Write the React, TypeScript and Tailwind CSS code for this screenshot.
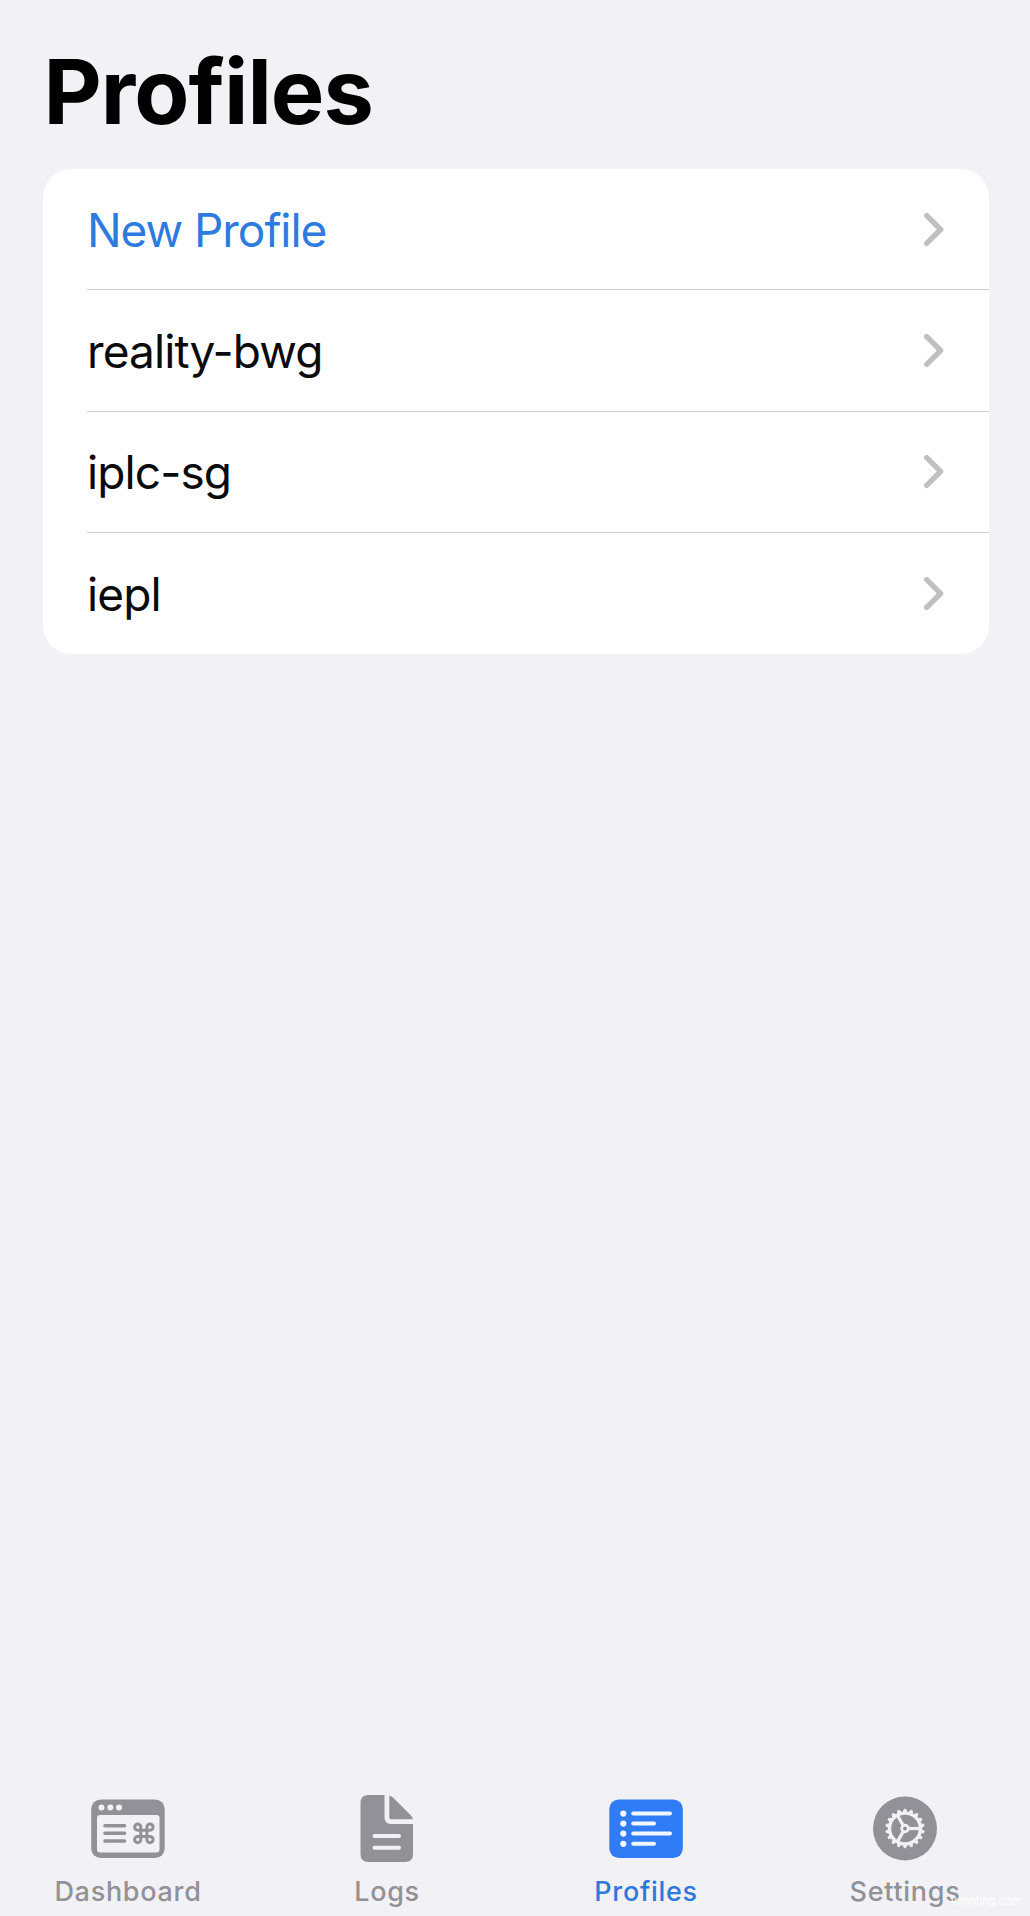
import type { ReactNode } from "react";

const profiles = ["reality-bwg", "iplc-sg", "iepl"];

function ChevronIcon() {
  return (
    <svg width="20" height="34" viewBox="0 0 20 34" fill="none" className="mt-px shrink-0">
      <path d="M2.7 2.7 L16.6 16.5 L2.7 30.3" stroke="#c0c0c2" strokeWidth="5.4" strokeLinecap="round" strokeLinejoin="round" />
    </svg>
  );
}

function DashboardIcon() {
  return (
    <svg width="74" height="68" viewBox="0 0 74 68" fill="none">
      <rect x="0.2" y="4.5" width="73.5" height="58.5" rx="9.5" fill="currentColor" />
      <rect x="6" y="20" width="62.5" height="37.5" rx="3" fill="#f2f1f5" />
      <circle cx="10.5" cy="12.5" r="3" fill="#f2f1f5" />
      <circle cx="19.3" cy="12.5" r="3" fill="#f2f1f5" />
      <circle cx="28" cy="12.5" r="3" fill="#f2f1f5" />
      <path d="M14 30.7H33.5M14 38.3H33.5M14 46H33.5" stroke="currentColor" strokeWidth="3.6" strokeLinecap="round" />
      <path
        d="M49.8 35.2V32.3a3.1 3.1 0 1 0-3.1 2.9H59a3.1 3.1 0 1 0-3.1-2.9V44.6a3.1 3.1 0 1 0 3.1-3.1H46.7a3.1 3.1 0 1 0 3.1 3.1Z"
        stroke="currentColor"
        strokeWidth="3"
        strokeLinejoin="round"
      />
    </svg>
  );
}

function LogsIcon() {
  return (
    <svg width="54" height="68" viewBox="0 0 54 68" fill="none">
      <path
        d="M8.5 0H24.5V22.5Q24.5 29 31 29H53V59Q53 67 45 67H8.5Q0.5 67 0.5 59V8Q0.5 0 8.5 0Z"
        fill="currentColor"
      />
      <path d="M29.3 0.5Q31.5 1 33.5 3L50 19.5Q52.5 22 53 24.3H31Q29.3 24.3 29.3 22.6Z" fill="currentColor" />
      <path d="M14.5 41H39M14.5 52.7H39" stroke="#f2f1f5" strokeWidth="4" strokeLinecap="round" />
    </svg>
  );
}

function ProfilesIcon() {
  return (
    <svg width="74" height="68" viewBox="0 0 74 68" fill="none">
      <rect x="0.3" y="4.5" width="73.5" height="58.5" rx="9.5" fill="#2f7cf6" />
      {[18.6, 28.6, 38.6, 48.8].map((y, i) => (
        <g key={y}>
          <circle cx="14.3" cy={y} r="3.1" fill="#f2f7ff" />
          <path d={`M24.2 ${y}H${i % 2 ? 45 : 61}`} stroke="#f2f7ff" strokeWidth="4" strokeLinecap="round" />
        </g>
      ))}
    </svg>
  );
}

function SettingsIcon() {
  const teeth = Array.from({ length: 18 }, (_, i) => i * 20 + 10);
  return (
    <svg width="64" height="68" viewBox="0 0 64 68" fill="none">
      <circle cx="32" cy="33.5" r="32" fill="currentColor" />
      <g transform="translate(32 33.5)" stroke="#f2f1f5">
        <circle r="15.4" strokeWidth="3.2" />
        {teeth.map((a) => (
          <path key={a} d="M16 -2.1L19.3 -0.8V0.8L16 2.1Z" transform={`rotate(${a})`} fill="#f2f1f5" strokeWidth="0.8" strokeLinejoin="round" />
        ))}
        <circle r="3.3" strokeWidth="2.8" />
        {[0, 120, 240].map((a) => (
          <path key={a} d="M4.2 0H15" transform={`rotate(${a})`} strokeWidth="3.2" />
        ))}
      </g>
    </svg>
  );
}

interface RowProps {
  label: string;
  accent?: boolean;
  last?: boolean;
}

function ProfileRow({ label, accent, last }: RowProps) {
  return (
    <li className="h-[121.3px] pl-[44px]">
      <div className={`flex h-full items-center justify-between pr-[45px] ${last ? "" : "border-b-[1.5px] border-[#cfcfd1]"}`}>
        <span className={`pt-px text-[46px] leading-none ${accent ? "tracking-[-1.05px] text-[#2d7ae0]" : "tracking-[-0.9px] text-[#0b0b0c]"}`}>
          {label}
        </span>
        <ChevronIcon />
      </div>
    </li>
  );
}

interface TabProps {
  label: string;
  icon: ReactNode;
  active?: boolean;
}

function Tab({ label, icon, active }: TabProps) {
  return (
    <button className={`flex flex-col items-center ${active ? "text-[#2d79dc]" : "text-[#929197]"}`}>
      {icon}
      <span className="mt-[14px] pl-px text-[27px] leading-[30px] font-medium tracking-[0.7px]">{label}</span>
    </button>
  );
}

export default function App() {
  return (
    <div className="relative flex h-[1916px] w-[1030px] flex-col overflow-hidden bg-[#f2f1f5] font-['Inter',sans-serif]">
      <h1 className="mt-[42px] ml-[43.5px] h-[127px] text-[90px] leading-[100px] font-bold tracking-[-1px] text-black">Profiles</h1>
      <ul className="mr-[41px] ml-[43px] rounded-[28px] bg-white">
        <ProfileRow label="New Profile" accent />
        {profiles.map((name, i) => (
          <ProfileRow key={name} label={name} last={i === profiles.length - 1} />
        ))}
      </ul>
      <nav className="mt-auto -mr-[4px] -ml-[2px] grid h-[121px] shrink-0 grid-cols-4">
        <Tab label="Dashboard" icon={<DashboardIcon />} />
        <Tab label="Logs" icon={<LogsIcon />} />
        <Tab label="Profiles" icon={<ProfilesIcon />} active />
        <Tab label="Settings" icon={<SettingsIcon />} />
      </nav>
      <span className="absolute right-[9px] bottom-[8px] text-[11px] leading-[14px] text-white">vminting.com</span>
    </div>
  );
}
